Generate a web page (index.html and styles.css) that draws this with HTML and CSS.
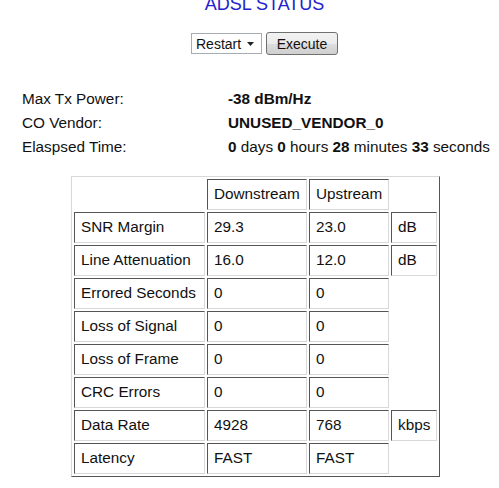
FILE: index.html
```html
<!DOCTYPE html>
<html>
<head>
<meta charset="utf-8">
<link rel="stylesheet" href="styles.css">
</head>
<body>
<div class="top">
  <div class="title">ADSL STATUS</div>
  <div class="controls">
    <span class="select-wrap">
      <select class="sel"><option>Restart</option></select>
      <svg class="arrow" width="7" height="4" viewBox="0 0 7 4"><path d="M0 0h7L3.5 4z" fill="#222"/></svg>
    </span>
    <button class="btn">Execute</button>
  </div>
</div>
<div class="info">
  <div class="lbl">Max Tx Power:</div><div class="val"><b>-38 dBm/Hz</b></div>
  <div class="lbl">CO Vendor:</div><div class="val"><b>UNUSED_VENDOR_0</b></div>
  <div class="lbl">Elaspsed Time:</div><div class="val"><b>0</b> days <b>0</b> hours <b>28</b> minutes <b>33</b> seconds</div>
</div>
<table class="stats">
  <colgroup><col class="c1"><col class="c2"><col class="c3"><col class="c4"></colgroup>
  <tr><td></td><td>Downstream</td><td>Upstream</td><td></td></tr>
  <tr><td>SNR Margin</td><td>29.3</td><td>23.0</td><td>dB</td></tr>
  <tr><td>Line Attenuation</td><td>16.0</td><td>12.0</td><td>dB</td></tr>
  <tr><td>Errored Seconds</td><td>0</td><td>0</td><td></td></tr>
  <tr><td>Loss of Signal</td><td>0</td><td>0</td><td></td></tr>
  <tr><td>Loss of Frame</td><td>0</td><td>0</td><td></td></tr>
  <tr><td>CRC Errors</td><td>0</td><td>0</td><td></td></tr>
  <tr><td>Data Rate</td><td>4928</td><td>768</td><td>kbps</td></tr>
  <tr><td>Latency</td><td>FAST</td><td>FAST</td><td></td></tr>
</table>
</body>
</html>
```
FILE: styles.css
```css
html, body {
  margin: 0;
  padding: 0;
  background: #fff;
}
body {
  font-family: "Liberation Sans", Arial, sans-serif;
  font-size: 15.3px;
  color: #111;
  overflow: hidden;
}
.top {
  padding-left: 30px;
  text-align: center;
}
.title {
  font-size: 18px;
  line-height: 21px;
  color: #2222cc;
  margin-top: -6px;
}
.controls {
  margin-top: 17px;
  display: flex;
  justify-content: center;
  align-items: center;
  gap: 4px;
  height: 23px;
}
.select-wrap {
  position: relative;
  display: inline-block;
}
.sel {
  -webkit-appearance: none;
  appearance: none;
  width: 71px;
  height: 21px;
  border: 1px solid #a5acb2;
  background: #fff;
  font-family: "Liberation Sans", Arial, sans-serif;
  font-size: 14px;
  color: #111;
  padding: 0 0 0 4px;
  margin: 0;
  border-radius: 0;
  display: block;
}
.arrow {
  position: absolute;
  right: 8px;
  top: 9px;
}
.btn {
  width: 72px;
  height: 23px;
  border: 1px solid #707070;
  border-radius: 3px;
  background: linear-gradient(#f2f2f2 0%, #ebebeb 50%, #dddddd 51%, #cfcfcf 100%);
  font-family: "Liberation Sans", Arial, sans-serif;
  font-size: 14px;
  color: #111;
  padding: 0;
  margin: 0;
}
.info {
  display: grid;
  grid-template-columns: 206px auto;
  margin-top: 32px;
  padding-left: 22px;
  line-height: 24px;
  white-space: nowrap;
}
.stats {
  margin: 17px 0 0 71px;
  border: 1px solid;
  border-color: #d8d8d8 #555 #555 #d8d8d8;
  border-spacing: 2px;
  empty-cells: hide;
  table-layout: fixed;
  width: 369px;
}
.stats td {
  border: 1px solid;
  border-color: #555 #d8d8d8 #d8d8d8 #555;
  height: 31px;
  box-sizing: border-box;
  padding: 0 0 2px 6px;
  white-space: nowrap;
  font-size: 15.3px;
}
.c1 { width: 131px; }
.c2 { width: 100px; }
.c3 { width: 80px; }
.c4 { width: 46px; }
```
